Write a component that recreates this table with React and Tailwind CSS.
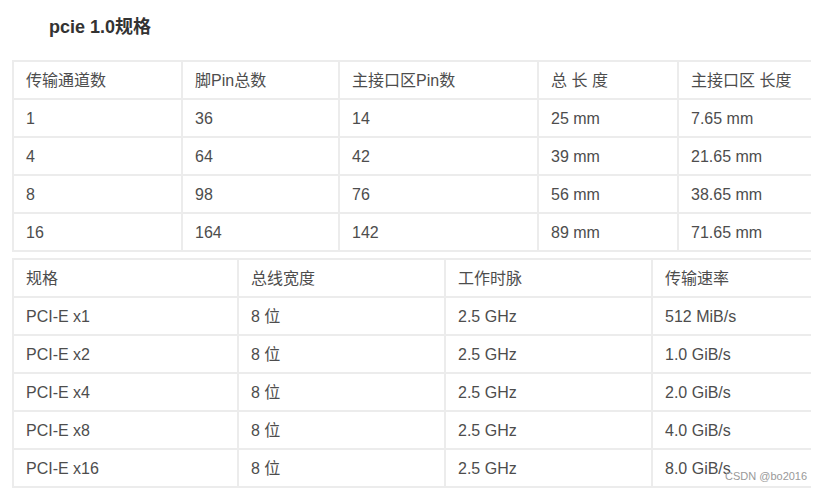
import React from "react";

const t1Cols = "grid-cols-[169px_157px_199px_140px_140px]";
const t2Cols = "grid-cols-[225px_207px_207px_165px]";

const t1 = [
  ["传输通道数", "脚Pin总数", "主接口区Pin数", "总 长 度", "主接口区 长度"],
  ["1", "36", "14", "25 mm", "7.65 mm"],
  ["4", "64", "42", "39 mm", "21.65 mm"],
  ["8", "98", "76", "56 mm", "38.65 mm"],
  ["16", "164", "142", "89 mm", "71.65 mm"],
];

const t2 = [
  ["规格", "总线宽度", "工作时脉", "传输速率"],
  ["PCI-E x1", "8 位", "2.5 GHz", "512 MiB/s"],
  ["PCI-E x2", "8 位", "2.5 GHz", "1.0 GiB/s"],
  ["PCI-E x4", "8 位", "2.5 GHz", "2.0 GiB/s"],
  ["PCI-E x8", "8 位", "2.5 GHz", "4.0 GiB/s"],
  ["PCI-E x16", "8 位", "2.5 GHz", "8.0 GiB/s"],
];

function Table({ rows, cols }) {
  return (
    <div className={`grid ${cols} border-b-2 border-[#ececec] w-max`}>
      {rows.map((r, i) =>
        r.map((c, j) => (
          <div
            key={i + "-" + j}
            className="h-[38px] flex items-center pl-[12px] pt-[2px] border-t-2 border-l-2 border-[#ececec] text-[16px] text-[#4d4d4d] whitespace-pre"
          >
            {c}
          </div>
        ))
      )}
    </div>
  );
}

export default function App() {
  return (
    <div
      className="relative w-[824px] h-[491px] bg-white overflow-hidden"
      style={{ fontFamily: '"Liberation Sans", "Noto Sans CJK SC", sans-serif' }}
    >
      <div className="pl-[49px] pt-[14px] h-[60px] text-[18px] font-bold text-[#333]">
        pcie 1.0规格
      </div>
      <div className="ml-[12px] w-[799px] overflow-hidden">
        <Table rows={t1} cols={t1Cols} />
        <div className="h-[6px]" />
        <Table rows={t2} cols={t2Cols} />
      </div>
      <div className="absolute left-[725px] top-[471px] text-[11px] text-[#999] leading-none">
        CSDN @bo2016
      </div>
    </div>
  );
}
